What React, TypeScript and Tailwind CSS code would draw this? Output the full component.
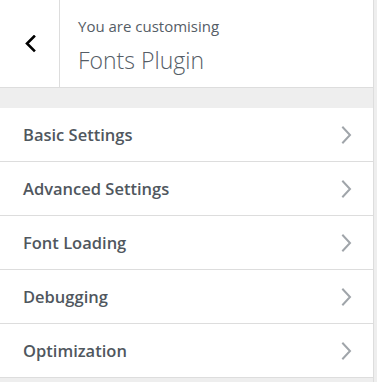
const sections = ['Basic Settings', 'Advanced Settings', 'Font Loading', 'Debugging', 'Optimization']

function Chevron({ left }: { left?: boolean }) {
  return (
    <svg width="12" height="18" viewBox="0 0 12 18" fill="none">
      <path
        d={left ? 'M9 1.5 L2 8.5 L9 15.5' : 'M3 1.5 L10 9 L3 16.5'}
        stroke="currentColor"
        strokeWidth={left ? 2.6 : 2}
        strokeLinecap="square"
      />
    </svg>
  )
}

export default function App() {
  return (
    <div className="w-[377px] h-[382px] bg-[#eeeeee] overflow-hidden" style={{ fontFamily: '"Open Sans", "Noto Sans", sans-serif' }}>
      <div className="w-[374px] h-full border-r border-[#dddddd] bg-[#eeeeee]">
        <div className="flex h-[88px] bg-white border-b border-[#dddddd]">
          <button className="w-[60px] h-full flex items-center justify-center border-r border-[#dddddd] text-black pl-[2px]">
            <Chevron left />
          </button>
          <div className="pl-[18px] pt-[15px] text-[#555d66]">
            <div className="text-[15px] leading-[22px]">You are customising</div>
            <div className="text-[23px] font-light leading-[30px] mt-[8px]">Fonts Plugin</div>
          </div>
        </div>
        <div className="h-[20px]" />
        <ul className="bg-white">
          {sections.map((s) => (
            <li key={s} className="h-[54px] flex items-center justify-between pl-[23px] pr-[21px] pt-[2px] border-b border-[#dddddd] text-[#50575e]">
              <span className="text-[16.5px] font-semibold">{s}</span>
              <span className="text-[#a0a5aa] -mt-[2px]">
                <Chevron />
              </span>
            </li>
          ))}
        </ul>
      </div>
    </div>
  )
}
